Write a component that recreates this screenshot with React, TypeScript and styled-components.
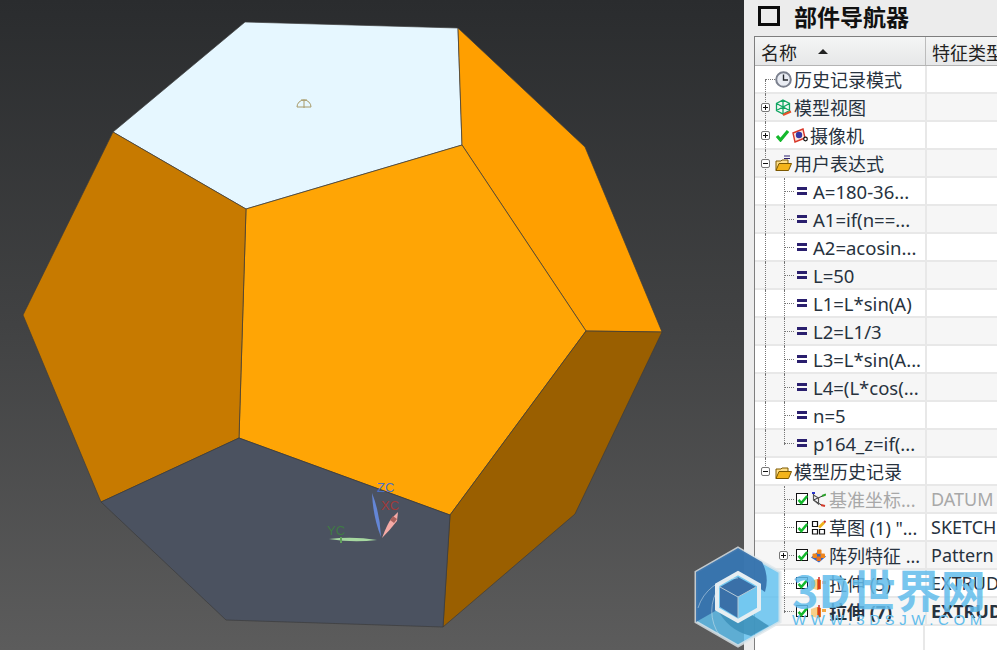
import styled, { createGlobalStyle } from 'styled-components';

const GlobalStyle = createGlobalStyle`
  html, body {
    margin: 0;
    padding: 0;
    overflow: hidden;
    background: #ececec;
  }
`;

type IconName = 'clock' | 'view' | 'check' | 'camera' | 'folder' | 'folderExpr' | 'datum' | 'sketch' | 'pattern' | 'extrude';

type TreeRow = {
  label: string;
  type?: string;
  kind: 'root' | 'expr' | 'feature';
  toggle?: '+' | '-';
  icons?: IconName[];
  dim?: boolean;
  bold?: boolean;
};

const exprs = ['A=180-36...', 'A1=if(n==...', 'A2=acosin...', 'L=50', 'L1=L*sin(A)', 'L2=L1/3', 'L3=L*sin(A...', 'L4=(L*cos(...', 'n=5', 'p164_z=if(...'];

const rows: TreeRow[] = [
  { label: '历史记录模式', kind: 'root', icons: ['clock'] },
  { label: '模型视图', kind: 'root', toggle: '+', icons: ['view'] },
  { label: '摄像机', kind: 'root', toggle: '+', icons: ['check', 'camera'] },
  { label: '用户表达式', kind: 'root', toggle: '-', icons: ['folderExpr'] },
  ...exprs.map((label): TreeRow => ({ label, kind: 'expr' })),
  { label: '模型历史记录', kind: 'root', toggle: '-', icons: ['folder'] },
  { label: '基准坐标...', type: 'DATUM', kind: 'feature', icons: ['datum'], dim: true },
  { label: '草图 (1) "...', type: 'SKETCH', kind: 'feature', icons: ['sketch'] },
  { label: '阵列特征 ...', type: 'Pattern', kind: 'feature', icons: ['pattern'], toggle: '+' },
  { label: '拉伸 (5)', type: 'EXTRUDE', kind: 'feature', icons: ['extrude'] },
  { label: '拉伸 (7)', type: 'EXTRUDE', kind: 'feature', icons: ['extrude'], bold: true },
];

function Icon({ name }: { name: IconName }) {
  switch (name) {
    case 'clock':
      return (
        <svg width="17" height="17" viewBox="0 0 17 17">
          <circle cx="8.5" cy="8.5" r="7.3" fill="#e9ecf3" stroke="#7b808e" strokeWidth="2" />
          <path d="M8.500 3.500v5.500h4.500" fill="none" stroke="#26282e" strokeWidth="1.4" />
        </svg>
      );
    case 'view':
      return (
        <svg width="17" height="17" viewBox="0 0 17 17">
          <path d="M8 1l6.500 3.500v7L8 15l-6.500-3.500v-7zM1.500 4.500L8 8l6.500-3.500M8 1v14M1.500 11.500L8 8l6.500 3.500" fill="none" stroke="#12a763" strokeWidth="1.3" />
          <path d="M8 16l8-3.500" stroke="#e8502a" strokeWidth="2" />
        </svg>
      );
    case 'check':
      return (
        <svg width="14" height="13" viewBox="0 0 14 13">
          <path d="M2 7l3.500 4 7.500-9" fill="none" stroke="#14b82c" strokeWidth="3.2" />
        </svg>
      );
    case 'camera':
      return (
        <svg width="16" height="15" viewBox="0 0 16 15">
          <path d="M1 5l10-4 2 9-10 4z" fill="#fbe6de" stroke="#d8382a" strokeWidth="1.400" />
          <circle cx="7" cy="7" r="3.200" fill="#3537a4" />
          <circle cx="13.500" cy="11" r="1.800" fill="#fff" stroke="#111" strokeWidth="1.200" />
        </svg>
      );
    case 'folder':
    case 'folderExpr':
      return (
        <svg width="17" height="17" viewBox="0 0 17 17">
          {name === 'folderExpr' && <path d="M9 1h6M9 3.500h6" stroke="#2a1f6e" strokeWidth="1.200" />}
          <path d="M1 15.500V6h5l1-1h6v3" fill="#ffe08a" stroke="#7c5800" strokeWidth="1" />
          <path d="M1 15.500l3-7h12.500l-3 7z" fill="#f4b41a" stroke="#7c5800" strokeWidth="1" />
        </svg>
      );
    case 'datum':
      return (
        <svg width="15" height="16" viewBox="0 0 15 16">
          <path d="M2.500 2v7M2.500 9l8 5M2.500 9l9-4" fill="none" stroke="#333" strokeWidth="1" />
          <path d="M2.500 4l5 3v6l-5-4z" fill="none" stroke="#555" strokeWidth="1.200" />
          <path d="M1 2h3" stroke="#2b35c9" strokeWidth="2" />
          <path d="M10 14l4 1" stroke="#d23a2a" strokeWidth="2" />
          <path d="M11 5l4-1.500" stroke="#2ca02c" strokeWidth="2" />
        </svg>
      );
    case 'sketch':
      return (
        <svg width="15" height="15" viewBox="0 0 15 15">
          <path d="M1.500 1.500h5v5h-5zM1.500 9.500h5v4.500h-5zM8.500 9.500h5v4.500h-5z" fill="#fff" stroke="#111" strokeWidth="1.200" />
          <path d="M8 7.500l5-5" stroke="#efb21a" strokeWidth="2.800" />
          <path d="M13 2.500l1.500-1.500" stroke="#d23a2a" strokeWidth="2.200" />
        </svg>
      );
    case 'pattern':
      return (
        <svg width="15" height="15" viewBox="0 0 15 15">
          <path d="M0 9.500l7-6 8 5-7 6z" fill="#3a66c0" />
          <rect x="6" y="1.500" width="4.500" height="4.500" rx="1" fill="#f0861c" />
          <rect x="1.500" y="5.500" width="4.500" height="4.500" rx="1" fill="#f0861c" />
          <rect x="9.500" y="5.500" width="4.500" height="4.500" rx="1" fill="#f0861c" />
          <rect x="5.500" y="8.500" width="4.500" height="4.500" rx="1" fill="#e8701c" />
        </svg>
      );
    case 'extrude':
      return (
        <svg width="15" height="15" viewBox="0 0 15 15">
          <path d="M0 5l6-2v11l-6-2z" fill="#f8cf8a" />
          <path d="M6 3l4 1v9l-4 1z" fill="#e8761c" />
          <path d="M8 1v12" stroke="#c22" strokeWidth="1.400" />
          <path d="M11 5h4v3h-4z" fill="#f4a640" />
        </svg>
      );
  }
}

function Dodecahedron() {
  return (
    <svg width="744" height="650" viewBox="0 0 744 650">
      <g stroke="#3c3c3c" strokeWidth="0.7" strokeLinejoin="round">
        <polygon points="245,22 458,28 462,145 246,209 113,132" fill="#e6f7ff" />
        <polygon points="458,28 585,147 662,332 586,331 462,145" fill="#ff9f00" />
        <polygon points="246,209 462,145 586,331 450,515 239,438" fill="#ffa505" />
        <polygon points="113,132 246,209 239,438 101,502 23,315" fill="#c77a00" />
        <polygon points="586,331 662,332 575,514 443,627 450,515" fill="#9a5f00" />
        <polygon points="239,438 450,515 443,627 226,620 101,502" fill="#4b5260" />
      </g>
      {/* work plane marker */}
      <g fill="none" stroke="#a89a68" strokeWidth="1">
        <path d="M297 107a7 7 0 0 1 14 0z" />
        <path d="M304 100v8M301 100h6" />
      </g>
      {/* csys triad */}
      <path d="M372 493q8 20 9 44q-8-20-9-44z" fill="#6486d6" />
      <path d="M382 538q6-16 10-20l6-6-1 9q-7 9-15 17z" fill="#f5aaa6" />
      <path d="M390 520l3-4 4 3-3 4z" fill="#a8605c" />
      <path d="M329 539q24-3 48 1q-24 3-48-1z" fill="#a6d8a0" />
      <path d="M340 537h2v6h-2z" fill="#5f9e5a" />
      <CsysLabel x="377" y="492" fill="#4a70c4">ZC</CsysLabel>
      <CsysLabel x="381" y="510" fill="#a03a3a">XC</CsysLabel>
      <CsysLabel x="327" y="535" fill="#3f7a45">YC</CsysLabel>
    </svg>
  );
}

function WatermarkMark() {
  return (
    <svg width="90" height="102" viewBox="0 0 90 102">
      <polygon points="45,2 87,26 87,76 45,100 3,76 3,26" fill="#5fc0ee" fillOpacity="0.82" stroke="#dfe6ea" strokeOpacity="0.8" strokeWidth="3" />
      <path d="M3 26L45 2l24 14a40 40 0 0 1 3 30L45 28 24 40v24L3 76z" fill="#346ea8" fillOpacity="0.9" />
      <path d="M24 62q10 22 34 28l18-10-29-19z" fill="#3c8fb8" fillOpacity="0.85" />
      <polygon points="45,27 66,39 66,63 45,75 24,63 24,39" fill="#73c8f0" stroke="#e6eef2" strokeWidth="4" />
      <polygon points="27,41 45,31 63,41 45,51" fill="#3a70a8" />
      <polygon points="27,41 45,51 45,72 27,61" fill="#3a70a8" />
      <path d="M45 51v21M27 41l18 10 18-10" stroke="#b6c8d4" strokeWidth="1" fill="none" />
      <path d="M5 62a42 42 0 0 1 40-30M27 90A42 42 0 0 1 27 40" fill="none" stroke="#d6e6ee" strokeOpacity="0.5" strokeWidth="1" />
    </svg>
  );
}

export default function App() {
  return (
    <Page>
      <GlobalStyle />
      <Viewport>
        <Dodecahedron />
      </Viewport>

      <Navigator>
        <TitleBar>
          <TitleBox />
          <Title>部件导航器</Title>
        </TitleBar>

        <Tree>
          <HeaderRow>
            <HeaderCell>
              名称
              <SortArrow />
            </HeaderCell>
            <HeaderCell>特征类型</HeaderCell>
          </HeaderRow>

          {rows.map((row, i) => (
            <Row key={i} $shaded={i % 2 === 1}>
              <NameCell>
                {i > 0 && i <= 13 && <VGuide $x={10} $top={0} $h={28} />}
                {i === 0 && <VGuide $x={10} $top={14} $h={14} />}
                {i === 14 && <VGuide $x={10} $top={0} $h={10} />}
                {row.kind === 'expr' && <VGuide $x={29} $top={0} $h={i === 13 ? 15 : 28} />}
                {row.kind === 'feature' && <VGuide $x={29} $top={0} $h={i === 19 ? 15 : 28} />}
                {i === 0 && <HGuide $x={10} $w={10} />}
                {row.kind !== 'root' && <HGuide $x={29} $w={10} />}

                {row.toggle && (
                  <Toggle $x={row.kind === 'feature' ? 24 : 6}>
                    <ToggleBar />
                    {row.toggle === '+' && <ToggleStem />}
                  </Toggle>
                )}

                {row.kind === 'root' && (
                  <RootIcons>
                    {row.icons?.map((name) => <Icon key={name} name={name} />)}
                  </RootIcons>
                )}
                {row.kind === 'expr' && <ExprMark />}
                {row.kind === 'feature' && (
                  <FeatureIcons>
                    <CheckBox>
                      <Icon name="check" />
                    </CheckBox>
                    {row.icons?.map((name) => <Icon key={name} name={name} />)}
                  </FeatureIcons>
                )}
                <Label $dim={row.dim} $bold={row.bold} $expr={row.kind === 'expr'}>
                  {row.label}
                </Label>
              </NameCell>
              <TypeCell $dim={row.dim} $bold={row.bold}>
                {row.type}
              </TypeCell>
            </Row>
          ))}

          <TreeFiller>
            <FillerColumn />
          </TreeFiller>
        </Tree>
      </Navigator>

      <Watermark>
        <WatermarkMark />
        <WatermarkText>
          <WatermarkName>3D世界网</WatermarkName>
          <WatermarkUrl>WWW.3DSJW.COM</WatermarkUrl>
        </WatermarkText>
      </Watermark>
    </Page>
  );
}

const textFont = `"Noto Sans", "Noto Sans CJK SC", sans-serif`;

const Page = styled.div`
  position: relative;
  display: flex;
  width: 997px;
  height: 650px;
  overflow: hidden;
  font-family: ${textFont};
  color: #27323e;
`;

const Viewport = styled.div`
  flex: 0 0 744px;
  height: 650px;
  background: linear-gradient(180deg, #2a2c2e 0%, #414243 50%, #5c5c5c 100%);
`;

const CsysLabel = styled.text`
  font-family: "Liberation Sans", sans-serif;
  font-size: 13px;
`;

const Navigator = styled.div`
  flex: 0 0 253px;
  display: flex;
  flex-direction: column;
  background: #ececec;
  box-sizing: border-box;
  padding-left: 10px;
`;

const TitleBar = styled.div`
  height: 36px;
  flex: none;
  box-sizing: border-box;
  display: flex;
  align-items: center;
  gap: 14px;
  padding: 0 0 4px 4px;
`;

const TitleBox = styled.div`
  width: 16px;
  height: 14px;
  border: 3px solid #0c0c0c;
`;

const Title = styled.div`
  font-family: "Noto Sans CJK SC", sans-serif;
  font-size: 23px;
  line-height: 30px;
  font-weight: 700;
  color: #111;
  white-space: nowrap;
`;

const Tree = styled.div`
  flex: 1;
  min-height: 0;
  display: flex;
  flex-direction: column;
  background: #fff;
  border-left: 1px solid #7e7e7e;
  border-top: 1px solid #7e7e7e;
`;

const HeaderRow = styled.div`
  flex: none;
  display: grid;
  grid-template-columns: 170px 1fr;
  height: 28px;
  background: linear-gradient(180deg, #f4f5f5 0%, #e6e7e8 100%);
  border-bottom: 1px solid #b4b4b4;
  overflow: hidden;
`;

const HeaderCell = styled.div`
  display: flex;
  align-items: center;
  padding: 1px 0 0 6px;
  font-size: 18px;
  white-space: nowrap;
  color: #222;
  border-left: 1px solid #bcbcbc;

  &:first-child {
    border-left: 0;
  }
`;

const SortArrow = styled.span`
  width: 0;
  height: 0;
  margin-left: 21px;
  border-left: 5px solid transparent;
  border-right: 5px solid transparent;
  border-bottom: 5px solid #222;
`;

const Row = styled.div<{ $shaded: boolean }>`
  flex: none;
  display: grid;
  grid-template-columns: 170px 1fr;
  height: 28px;
  box-sizing: border-box;
  background: ${(p) => (p.$shaded ? '#f6f6f6' : '#ffffff')};
  border-bottom: 2px solid #e8e8e8;
`;

const NameCell = styled.div`
  position: relative;
  display: flex;
  align-items: center;
  min-width: 0;
  white-space: nowrap;
`;

const TypeCell = styled.div<{ $dim?: boolean; $bold?: boolean }>`
  display: flex;
  align-items: center;
  padding-left: 4px;
  font-size: 18px;
  white-space: nowrap;
  overflow: hidden;
  border-left: 2px solid #e8e8e8;
  color: ${(p) => (p.$dim ? '#a8a8a8' : '#27323e')};
  font-weight: ${(p) => (p.$bold ? 700 : 400)};
`;

const VGuide = styled.span<{ $x: number; $top: number; $h: number }>`
  position: absolute;
  left: ${(p) => p.$x}px;
  top: ${(p) => p.$top}px;
  height: ${(p) => p.$h}px;
  border-left: 1px dotted #777;
`;

const HGuide = styled.span<{ $x: number; $w: number }>`
  position: absolute;
  left: ${(p) => p.$x}px;
  top: 13px;
  width: ${(p) => p.$w}px;
  border-top: 1px dotted #777;
`;

const Toggle = styled.span<{ $x: number }>`
  position: absolute;
  left: ${(p) => p.$x}px;
  top: 9px;
  width: 9px;
  height: 9px;
  box-sizing: border-box;
  background: #fff;
  border: 1px solid #777;
  border-radius: 2px;
`;

const ToggleBar = styled.span`
  position: absolute;
  left: 1px;
  top: 3px;
  width: 5px;
  height: 1px;
  background: #111;
`;

const ToggleStem = styled.span`
  position: absolute;
  left: 3px;
  top: 1px;
  width: 1px;
  height: 5px;
  background: #111;
`;

const RootIcons = styled.span`
  display: flex;
  align-items: center;
  gap: 3px;
  margin-left: 20px;
  margin-right: 2px;
`;

const ExprMark = styled.span`
  flex: none;
  width: 10px;
  height: 2px;
  margin: 0 6px 0 42px;
  border-top: 3px solid #2a1f6e;
  border-bottom: 3px solid #2a1f6e;
`;

const FeatureIcons = styled.span`
  display: flex;
  align-items: center;
  gap: 3px;
  margin-left: 41px;
  margin-right: 3px;
`;

const CheckBox = styled.span`
  display: flex;
  align-items: center;
  justify-content: center;
  width: 12px;
  height: 12px;
  box-sizing: border-box;
  background: #fff;
  border: 1.500px solid #111;

  svg {
    flex: none;
    width: 11px;
    height: 11px;
  }
`;

const Label = styled.span<{ $dim?: boolean; $bold?: boolean; $expr?: boolean }>`
  font-size: ${(p) => (p.$expr ? '18.5px' : '18px')};
  color: ${(p) => (p.$dim ? '#a8a8a8' : '#27323e')};
  font-weight: ${(p) => (p.$bold ? 700 : 400)};
`;

const TreeFiller = styled.div`
  flex: 1;
  display: grid;
  grid-template-columns: 170px 1fr;
`;

const FillerColumn = styled.div`
  border-right: 2px solid #e8e8e8;
`;

const Watermark = styled.div`
  position: absolute;
  left: 693px;
  top: 546px;
  display: flex;
  gap: 9px;
  pointer-events: none;
`;

const WatermarkText = styled.div`
  display: flex;
  flex-direction: column;
  margin-top: 19px;
`;

const WatermarkName = styled.div`
  font-family: "Noto Sans CJK SC", sans-serif;
  font-size: 45px;
  font-weight: 700;
  line-height: 47px;
  color: #62bdec;
  opacity: 0.85;
  white-space: nowrap;
`;

const WatermarkUrl = styled.div`
  font-family: "Liberation Sans", sans-serif;
  font-size: 15px;
  line-height: 16px;
  letter-spacing: 4.6px;
  color: #62bdec;
  white-space: nowrap;
`;
